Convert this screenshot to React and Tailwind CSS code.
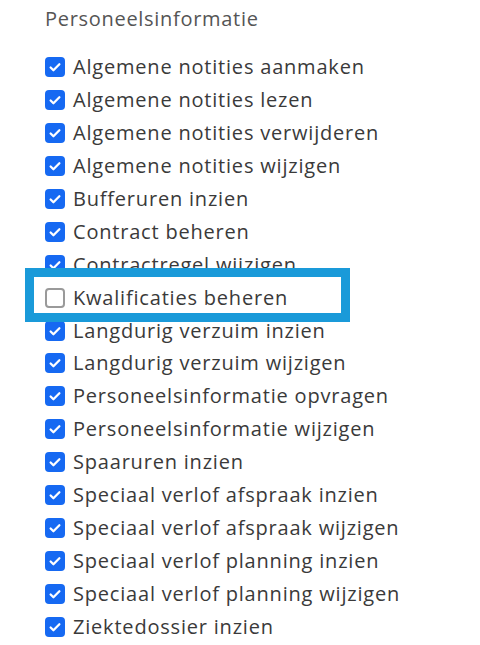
import React from "react";

const items = [
  ["Algemene notities aanmaken", true],
  ["Algemene notities lezen", true],
  ["Algemene notities verwijderen", true],
  ["Algemene notities wijzigen", true],
  ["Bufferuren inzien", true],
  ["Contract beheren", true],
  ["Contractregel wijzigen", true],
  ["Kwalificaties beheren", false],
  ["Langdurig verzuim inzien", true],
  ["Langdurig verzuim wijzigen", true],
  ["Personeelsinformatie opvragen", true],
  ["Personeelsinformatie wijzigen", true],
  ["Spaaruren inzien", true],
  ["Speciaal verlof afspraak inzien", true],
  ["Speciaal verlof afspraak wijzigen", true],
  ["Speciaal verlof planning inzien", true],
  ["Speciaal verlof planning wijzigen", true],
  ["Ziektedossier inzien", true],
];

function Box({ checked }) {
  if (!checked) {
    return (
      <span className="w-[20px] h-[20px] rounded-[4px] border-2 border-[#9a9a9a] bg-white shrink-0" />
    );
  }
  return (
    <span className="w-[20px] h-[20px] rounded-[4px] bg-[#1669f2] shrink-0 flex items-center justify-center">
      <svg width="14" height="14" viewBox="0 0 16 16" fill="none">
        <path d="M3 8.5l3.2 3.2L13 4.8" stroke="white" strokeWidth="2.6" strokeLinecap="round" strokeLinejoin="round" />
      </svg>
    </span>
  );
}

export default function App() {
  return (
    <div className="relative w-[480px] h-[645px] bg-white overflow-hidden font-['Open_Sans',sans-serif]">
      <div className="pl-[45px] pt-[4px]">
        <div className="text-[20px] text-[#555] leading-[30px] tracking-[0.7px]">Personeelsinformatie</div>
        <div className="mt-[17px] flex flex-col">
          {items.map(([label, checked]) => (
            <div key={label} className="flex items-center gap-[8px] h-[32.9px]">
              <Box checked={checked} />
              <span className="text-[20px] font-medium text-[#3a3a3a] leading-none tracking-[0.8px]">{label}</span>
            </div>
          ))}
        </div>
      </div>
      <div className="absolute left-[25px] top-[268px] w-[325px] h-[54px] border-[9px] border-[#1a9ad9]" />
    </div>
  );
}
